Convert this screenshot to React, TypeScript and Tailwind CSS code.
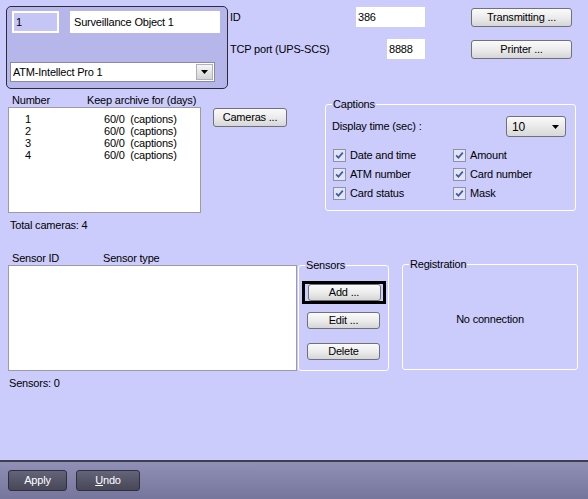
import React from "react";

const FONT = "font-['Liberation_Sans',Arial,sans-serif] text-[11px] tracking-[-0.2px] text-black";

function Btn({ label, className = "" }: { label: React.ReactNode; className?: string }) {
  return (
    <div
      className={`flex items-center justify-center rounded-[3px] border border-[#707078] bg-gradient-to-b from-[#fafafa] via-[#ececec] to-[#d6d6d6] ${className}`}
    >
      {label}
    </div>
  );
}

function Arrow() {
  return (
    <svg width="7" height="4" viewBox="0 0 7 4">
      <path d="M0 0h7L3.5 4z" fill="#000" />
    </svg>
  );
}

function Check({ label }: { label: string }) {
  return (
    <div className="flex h-[13px] items-center gap-[4px]">
      <svg width="13" height="13" viewBox="0 0 13 13">
        <rect x="0.5" y="0.5" width="12" height="12" fill="#e4e4f0" stroke="#8a92b4" />
        <path d="M3.2 6.4 L5.4 8.8 L9.8 3.6" stroke="#3a58ac" strokeWidth="1.7" fill="none" />
      </svg>
      <span>{label}</span>
    </div>
  );
}

function Group({
  legend,
  className = "",
  children,
}: {
  legend: string;
  className?: string;
  children?: React.ReactNode;
}) {
  return (
    <div className={`relative rounded-[3px] border border-white ${className}`}>
      <span className="absolute left-[6px] top-[-8px] bg-[#ccccfc] px-[1px] leading-[14px]">{legend}</span>
      {children}
    </div>
  );
}

const cameras = [1, 2, 3, 4];

export default function App() {
  return (
    <div className={`flex h-[499px] w-[588px] flex-col bg-[#ccccfc] ${FONT}`}>
      <div className="flex-1">
        {/* Top row */}
        <div className="flex pl-[6px] pt-[6px]">
          <div className="flex h-[83px] w-[222px] flex-col rounded-[5px] border border-[#2c2c3c] bg-[#b6b6ea]">
            <div className="mt-[4px] flex">
              <div className="ml-[5px] flex h-[22px] w-[47px] items-center border-2 border-white bg-[#c6c6f6] pl-[2px]">
                1
              </div>
              <div className="ml-[11px] flex h-[22px] w-[150px] items-center bg-white pl-[4px]">
                Surveillance Object 1
              </div>
            </div>
            <div className="ml-[3px] mt-[29px] flex h-[20px] w-[205px] items-center border border-[#8a8aa8] bg-white">
              <span className="flex-1 pl-[2px]">ATM-Intellect Pro 1</span>
              <div className="mr-[1px] flex h-[16px] w-[17px] items-center justify-center border border-[#b0b0b8] bg-gradient-to-b from-[#f6f6f6] to-[#d4d4d8]">
                <Arrow />
              </div>
            </div>
          </div>

          <div className="ml-[2px] flex w-[195px] flex-col">
            <div className="mt-[1px] flex h-[20px] items-center justify-between">
              <span>ID</span>
              <div className="flex h-[20px] w-[69px] items-center bg-white pl-[2px]">386</div>
            </div>
            <div className="mt-[12px] flex h-[20px] items-center justify-between">
              <span>TCP port (UPS-SCS)</span>
              <div className="flex h-[20px] w-[38px] items-center bg-white pl-[2px]">8888</div>
            </div>
          </div>

          <div className="ml-[46px] flex flex-col">
            <Btn label="Transmitting ..." className="mt-[2px] h-[19px] w-[101px]" />
            <Btn label="Printer ..." className="mt-[13px] h-[19px] w-[101px]" />
          </div>
        </div>

        {/* Cameras row */}
        <div className="mt-[5px] flex">
          <div className="ml-[8px] flex w-[193px] flex-col">
            <div className="flex h-[13px] items-center leading-[13px]">
              <span className="w-[79px] pl-[4px]">Number</span>
              <span>Keep archive for (days)</span>
            </div>
            <div className="h-[106px] border border-[#9a9aa8] bg-white pt-[5px]">
              {cameras.map((n) => (
                <div key={n} className="flex h-[12px] items-center leading-[12px]">
                  <span className="w-[95px] pl-[16px]">{n}</span>
                  <span className="whitespace-pre">60/0  (captions)</span>
                </div>
              ))}
            </div>
          </div>

          <Btn label="Cameras ..." className="ml-[12px] mt-[14px] h-[19px] w-[74px]" />

          <Group legend="Captions" className="ml-[38px] mt-[10px] h-[107px] w-[251px]">
            <div className="mt-[11px] flex h-[21px] items-center justify-between pl-[6px] pr-[9px]">
              <span>Display time (sec) :</span>
              <div className="flex h-[21px] w-[60px] items-center justify-between rounded-[3px] border border-[#707078] bg-gradient-to-b from-[#fafafa] to-[#d8d8d8] pl-[5px] pr-[6px] text-[12px]">
                <span>10</span>
                <Arrow />
              </div>
            </div>
            <div className="mt-[12px] grid grid-cols-[120px_1fr] gap-y-[6px] pl-[7px]">
              <Check label="Date and time" />
              <Check label="Amount" />
              <Check label="ATM number" />
              <Check label="Card number" />
              <Check label="Card status" />
              <Check label="Mask" />
            </div>
          </Group>
        </div>

        <div className="ml-[10px] mt-[5px] flex h-[14px] items-center">Total cameras: 4</div>

        {/* Sensors row */}
        <div className="mt-[19px] flex">
          <div className="ml-[8px] flex w-[289px] flex-col">
            <div className="flex h-[14px] items-center">
              <span className="w-[95px] pl-[4px]">Sensor ID</span>
              <span>Sensor type</span>
            </div>
            <div className="h-[106px] border border-[#9a9aa8] bg-white" />
          </div>

          <Group legend="Sensors" className="ml-[1px] mt-[14px] h-[106px] w-[91px]">
            <div className="flex flex-col pl-[3px] pt-[15px]">
              <div className="flex h-[23px] w-[84px] items-center justify-center border-[3px] border-black">
                <Btn label="Add ..." className="h-[17px] w-[73px]" />
              </div>
              <Btn label="Edit ..." className="ml-[5px] mt-[8px] h-[17px] w-[73px]" />
              <Btn label="Delete" className="ml-[5px] mt-[14px] h-[17px] w-[73px]" />
            </div>
          </Group>

          <Group legend="Registration" className="ml-[13px] mt-[13px] flex h-[106px] w-[176px] items-center justify-center pt-[5px]">
            <span>No connection</span>
          </Group>
        </div>

        <div className="ml-[9px] mt-[5px] flex h-[14px] items-center">Sensors: 0</div>
      </div>

      {/* Bottom bar */}
      <div className="flex h-[39px] items-start gap-[9px] border-t-2 border-[#3e3e4e] bg-gradient-to-b from-[#9090b6] to-[#76769c] pl-[8px] pt-[8px] text-white">
        <div className="flex h-[21px] w-[59px] items-center justify-center rounded-[3px] border border-[#30303c] bg-gradient-to-b from-[#64647a] to-[#474758]">
          Apply
        </div>
        <div className="flex h-[21px] w-[64px] items-center justify-center rounded-[3px] border border-[#30303c] bg-gradient-to-b from-[#64647a] to-[#474758]">
          <span>
            <span className="underline">U</span>ndo
          </span>
        </div>
      </div>
    </div>
  );
}
